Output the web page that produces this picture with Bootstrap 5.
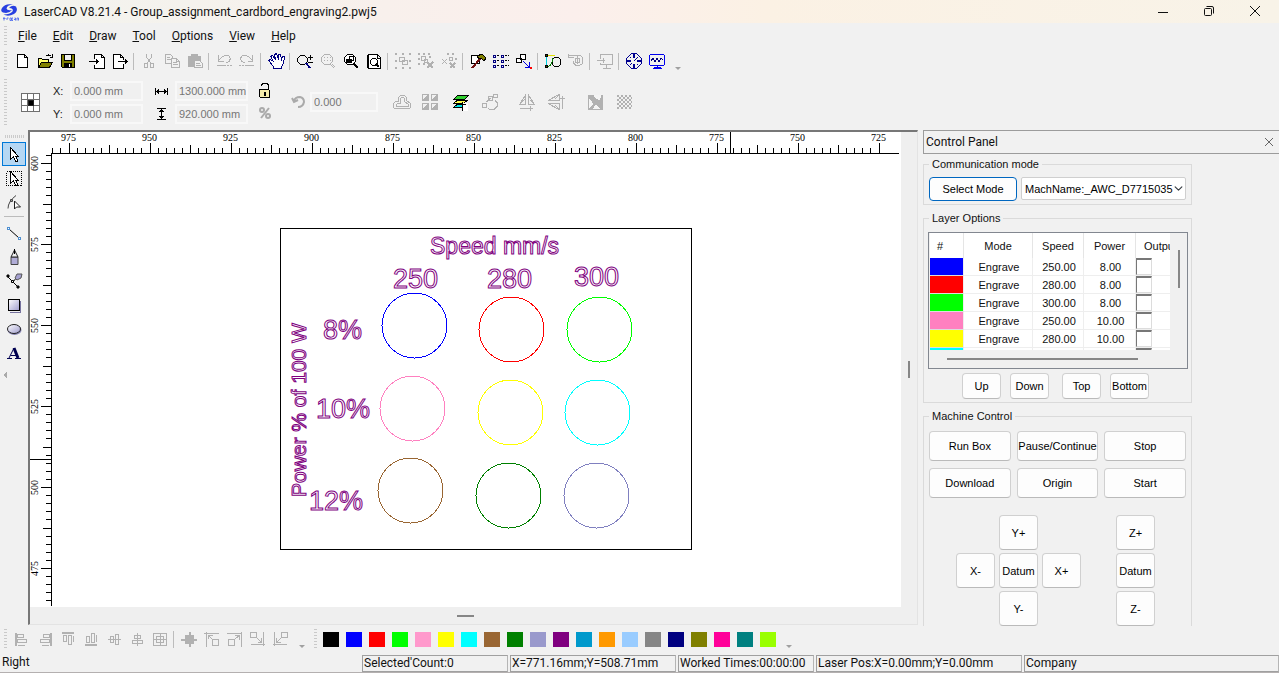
<!DOCTYPE html>
<html lang="en">
<head>
<meta charset="utf-8">
<meta name="viewport" content="width=device-width, initial-scale=1">
<title>LaserCAD V8.21.4</title>
<link href="https://cdn.jsdelivr.net/npm/bootstrap@5.3.0/dist/css/bootstrap.min.css" rel="stylesheet">
<style>
:root { --face: #f1f1f1; --off: #b1b1b1; --ui: Roboto, "Noto Sans", sans-serif; --form: "Liberation Sans", Arial, sans-serif; }
body { background: var(--face); color: #111; font: 12px/16px var(--ui); overflow: hidden; }
svg { display: block; flex: none; }
.titlebar { height: 23px; background: linear-gradient(90deg, #f2f4ee, #f8f0ec 30%, #fbefec 45%, #fbf1e4 60%, #f8f3e8); }
.win-controls { gap: 28px; padding-right: 15px; }
.plain { background: none; border: 0; padding: 0; color: inherit; display: flex; align-items: center; justify-content: center; }
.menubar { height: 25px; }
.menubar a { color: #111; text-decoration: none; padding: 0 8px; }
.grip { width: 3px; background: repeating-linear-gradient(#c9c9c9 0 1px, transparent 1px 3px); flex: none; }
.toolbar { height: 26px; }
.toolbar > .grip:first-child { margin: 0 3px 0 4px; }
.toolbar svg, .sidebar svg, .props svg { width: 18px; height: 18px; fill: none; stroke: currentColor; shape-rendering: crispEdges; }
.toolbar .plain { width: 23px; height: 22px; color: #000; }
.toolbar .plain:disabled, .props .plain:disabled { color: var(--off); }
.vline { width: 1px; height: 17px; background: #bcbcbc; margin: 0 3px 0 2px; flex: none; }
.more { width: 0; border: 3px solid transparent; border-top-color: #a0a0a0; border-bottom: 0; margin: 14px 0 0 7px; }
.swatches + .more { margin-left: 10px; }
.props { height: 56px; font-family: var(--form); font-size: 11px; color: #222; }
.props input { height: 20px; width: 73px; border: 2px solid #f8f8f8; background: #f0f0f0; color: #767676; padding: 0 0 0 2px; font-size: 11px; }
.props input.angle { width: 68px; }
.props-pair { display: grid; grid-template-columns: 17px 73px; row-gap: 3px; align-items: center; }
.sidebar { width: 28px; }
.sidebar .plain { width: 24px; height: 24px; color: #000; }
.sidebar .picked { background: #b5d7f3; border: 1px solid #0078d7; }
.sidebar .grip { width: 19px; height: 3px; background: repeating-linear-gradient(90deg, #cbcbcb 0 1px, transparent 1px 2px); margin: 5px 0 4px; }
.sidebar hr { width: 20px; border-color: #bbb; margin: 2px 0 4px; opacity: 1; }
.stage { display: grid; grid-template: 1fr 17px / 1fr 16px; border: 2px solid #696969; border-top-color: #777; border-left-color: #777; border-right: 1px solid #e3e3e3; border-bottom: 1px solid #e3e3e3; margin: 0 5px 1px 0; background: #efefef; min-width: 0; min-height: 0; }
.stage > svg { width: 100%; height: 100%; background: #fff; min-height: 0; overflow: hidden; shape-rendering: crispEdges; }
.stage text { font-family: "Liberation Serif", serif; font-size: 10px; text-anchor: middle; fill: #000; shape-rendering: auto; }
.stage .outline text { font-family: "Liberation Sans", Arial, sans-serif; font-size: 27px; text-anchor: start; fill: #fff; stroke: purple; stroke-width: 1; }
.stage .outline .speed-title { font-size: 23px; }
.stage .outline .power-title { font-size: 21px; }
.thumb { background: #868686; }
.panel { width: 356px; font-family: var(--form); font-size: 11px; line-height: 12px; }
.panel-head { height: 24px; border: 1px solid #9c9c9c; border-right: 0; font: 12px/16px var(--ui); padding: 0 6px 0 2px; flex: none; }
.group { width: 269px; border: 1px solid #dadada; padding: 7px 5px 3px; flex: none; }
.group legend { float: none; width: auto; margin: 0; padding: 0 3px; font-size: 11px; line-height: 12px; }
.group.layers { margin-top: 7px; padding-top: 8px; }
.group.machine { margin-top: 7px; padding-top: 9px; flex: 1 1 0; min-height: 0; overflow: hidden; border-bottom: 0; }
.key { background: #fdfdfd; border: 1px solid #d0d0d0; border-bottom-color: #bababa; border-radius: 4px; padding: 0; font-size: 11px; line-height: 12px; color: #000; white-space: nowrap; }
.key:hover { background: #e9f3fb; color: #000; }
.key.mode { width: 88px; height: 24px; border-color: #0067c0; flex: none; }
.machine-select { height: 23px; font-size: 11px; line-height: 12px; padding: 0 10px 0 3px; border: 1px solid #cfcfcf; border-radius: 2px; background-position: right 2px center; background-size: 9px; color: #000; text-overflow: clip; }
.layer-list { display: grid; grid-template: 117px 18px / 1fr 17px; border: 1px solid #828790; background: #f0f0f0; padding-left: 1px; margin: 0 -2px 0 -1px; }
.layer-view { overflow: hidden; background: #fff; }
.layer-view table { table-layout: fixed; width: 262px; border-collapse: separate; border-spacing: 0; text-align: center; }
.layer-view th { height: 25px; font-weight: 400; border-right: 1px solid #e5e5e5; padding: 1px 0 0; }
.layer-view td { height: 18px; border-right: 1px solid #eee; border-bottom: 1px solid #eee; padding: 1px 0 0 2px; }
.layer-view td.ink { padding: 0; border-bottom-color: #ddd; }
.layer-view td.pick { padding: 0; text-align: left; }
.pick input { appearance: none; display: block; width: 16px; height: 17px; border: 1px solid #dcdcdc; border-top: 2px solid #777; border-left-color: #777; background: #fff; margin: 0; }
.order .key { width: 39px; height: 26px; }
.machine-keys { display: grid; grid-template-columns: repeat(3, 1fr); gap: 7px 6px; grid-auto-rows: 30px; }
.jog { display: grid; grid-template: repeat(3, 35px) / repeat(3, 39px) 39px; column-gap: 4px; row-gap: 3px; margin: 17px 0 0 27px; }
.jog .z { margin-left: 31px; width: 39px; }
.swatch { width: 16px; height: 15px; border: 0; padding: 0; flex: none; }
.swatches { gap: 7px; }
.statusbar { height: 21px; padding-top: 3px; gap: 2px; border-bottom: 1px solid #b4b0b0; line-height: 15px; }
.statusbar div { border: 1px solid #a0a0a0; border-right-color: #b5b5b5; height: 17px; padding: 0 1px; flex: none; overflow: hidden; white-space: nowrap; }
.statusbar .hint { border: 0; width: 360px; padding-left: 2px; }
</style>
</head>
<body class="vh-100 d-flex flex-column">

<header class="titlebar d-flex align-items-center">
  <svg width="20" height="20" viewBox="0 0 20 20">
    <path d="M2 6Q5 1 13 2.500Q7 3 6.500 6.500Q7 9 12 8Q9 12 3 10.500Q0 9 2 6zM16 4.500Q18.500 9 14 12Q8 15 3.500 12.500Q10 12.500 12.500 9.500Q14 6 9 6Q12 2.500 16 4.500z" fill="#2740e0"/>
    <path d="M3 16.500h2.500M4 15v3.500M7 18v-2h1.500M10 16h1.500v2.500h-1.500zM13 16h-1v2.500h1M14 17.500h2M14.500 16h1v2.500M17 18.500v-2.500h1.500v2.500" stroke="#5c74ee" fill="none"/>
  </svg>
  <span class="ps-1">LaserCAD V8.21.4 - Group_assignment_cardbord_engraving2.pwj5</span>
  <div class="win-controls d-flex ms-auto">
    <button class="plain" aria-label="Minimize"><svg width="18" height="12" stroke="#111" fill="none"><path d="M4 6.500h10"/></svg></button>
    <button class="plain" aria-label="Maximize"><svg width="18" height="14" stroke="#111" fill="none"><rect x="4.500" y="3.500" width="7" height="7" rx="1"/><path d="M6.500 1.500h5.500q1.500 0 1.500 1.500v5.500"/></svg></button>
    <button class="plain" aria-label="Close"><svg width="18" height="14" stroke="#111" fill="none"><path d="M4 1l10 10M14 1l-10 10"/></svg></button>
  </div>
</header>

<nav class="menubar d-flex align-items-center">
  <span class="grip h-75 ms-1" style="margin-right:3px"></span>
  <a href="#"><u>F</u>ile</a><a href="#"><u>E</u>dit</a><a href="#"><u>D</u>raw</a><a href="#"><u>T</u>ool</a><a href="#"><u>O</u>ptions</a><a href="#"><u>V</u>iew</a><a href="#"><u>H</u>elp</a>
</nav>

<div class="toolbar d-flex align-items-center">
  <span class="grip h-75"></span>
  <button class="plain" aria-label="New"><svg><path fill="#fff" d="M4.500 2.500h7l3 3v10h-10zM11.500 2.500v3h3"/></svg></button>
  <button class="plain" aria-label="Open"><svg><path fill="#ffff70" d="M2.500 15.500v-9h3l1 1h6v3"/><path fill="#808000" d="M2.500 15.500l3-5h11l-3 5z"/><path d="M9.500 4.500q3-3 6 0M16.500 2v3.500h-3"/></svg></button>
  <button class="plain" aria-label="Save"><svg><path fill="#808000" d="M2.500 2.500h13v13h-12l-1-1z"/><path fill="#f1f1f1" d="M5.500 2.500h7v6h-7z"/><path fill="#000" d="M5.500 11.500h7v4h-7z"/><path stroke="#fff" d="M10.500 12v3"/></svg></button>
  <span class="vline opacity-0"></span>
  <button class="plain" aria-label="Import"><svg><path fill="#fff" d="M6.500 6.500v-4h7l3 3v11h-10v-4M13.500 2.500v3h3"/><path d="M1 9.500h10M8.500 7v5M9.500 8v3"/></svg></button>
  <button class="plain" aria-label="Export"><svg><path fill="#fff" d="M12.500 12v4.500h-10v-14h7l3 3v2M9.500 2.500v3h3"/><path d="M7 9.500h10M14.500 7v5M15.500 8v3"/></svg></button>
  <span class="vline"></span>
  <button class="plain" disabled aria-label="Cut"><svg><path d="M6.500 2v3l4 6M11.500 2v3l-4 6M4.500 11.500h3v4h-3zM10.500 11.500h3v4h-3z"/></svg></button>
  <button class="plain" disabled aria-label="Copy"><svg><path d="M2.500 2.500h5l2 2v7h-7zM4 5.500h3M4 7.500h4"/><path fill="#f1f1f1" d="M8.500 6.500h5l3 3v6h-8zM13.500 6.500v3h3M10 10.500h4M10 12.500h5"/></svg></button>
  <button class="plain" disabled aria-label="Paste"><svg><path fill="currentColor" d="M2.500 4.500h12v10h-12zM5.500 2.500h6v2h-6z"/><path fill="#f1f1f1" d="M8.500 8.500h5l3 3v4h-8zM10 11.500h4M10 13.500h5"/></svg></button>
  <span class="vline"></span>
  <button class="plain" disabled aria-label="Undo"><svg><path d="M3.500 3v6h5M3.500 8.500l4-4q6-3 7.500 1q1 4-4 5.500M2 13.500h9M12 13.500h2M15 13.500h2"/></svg></button>
  <button class="plain" disabled aria-label="Redo"><svg><path d="M14.500 3v6h-5M14.500 8.500l-4-4q-6-3-7.500 1q-1 4 4 5.500M16 13.500h-9M6 13.500h-2M3 13.500h-2"/></svg></button>
  <span class="vline"></span>
  <button class="plain" aria-label="Pan"><svg style="stroke:#000080"><path fill="#fff" d="M6.500 16.500v-2l-5-6 2-1 3 2-3-5 2-1 3 4-1-5 2-1 2 6v-5h2l1 5 1-3h2l-1 7-2 3v2z"/></svg></button>
  <span class="vline"></span>
  <button class="plain" aria-label="Zoom"><svg><path d="M4.500 3.500h4l3 3v3l-3 3h-4l-3-3v-3z"/><path d="M14.500 3v5M12 5.500h5M12 10.500h5"/><path stroke="#000080" stroke-width="2" d="M10 11l4 5"/></svg></button>
  <button class="plain" disabled aria-label="Zoom selection"><svg><path d="M5.500 2.500h5l3 3v4l-3 3h-5l-3-3v-4zM5 5.500h1M8 5.500h1M11 5.500h1M5 8.500h1M8 8.500h1M11 8.500h1M11 12l4 4M13 12l3 3"/></svg></button>
  <button class="plain" aria-label="Zoom all"><svg><path fill="#fff" d="M5.500 2.500h5l3 3v4l-3 3h-5l-3-3v-4zM4 4l-1 1M4 11l-1-1M12 4l1 1"/><path fill="#000" d="M4.500 7.500h5v3h-5z"/><path d="M7.500 7v-2.500h4v4h-2"/><path stroke-width="2" d="M12 12l4 4"/></svg></button>
  <button class="plain" aria-label="Zoom page"><svg><path fill="#fff" d="M3.500 2.500h9l3 3v11h-12zM2.500 3v13M12.500 3v3h3"/><path d="M7.500 6.500h3l2 2v3l-2 2h-3l-2-2v-3z"/><path stroke-width="2" d="M11 12l3 3"/></svg></button>
  <span class="vline"></span>
  <button class="plain" disabled aria-label="Group"><svg><path d="M5.500 5.500h5v4h-5zM8.500 8.500h5v4h-5z"/><path stroke-width="2" stroke-dasharray="2 5" d="M1 2h16M1 9h3M15 9h3M1 16h16"/></svg></button>
  <button class="plain" disabled aria-label="Ungroup"><svg><path d="M4.500 4.500h4v4h-4zM7.500 7.500h3v3h-3z"/><path stroke-width="2" stroke-dasharray="2 3" d="M1 2h12M1 7h2M1 12h7M12 5h2"/><path stroke-width="2" d="M10 10l6 6M16 10l-6 6"/></svg></button>
  <button class="plain" disabled aria-label="Ungroup all"><svg><path d="M9.500 5.500h3v3h-3zM2 7l5 5M7 7l-5 5"/><path stroke-width="2" stroke-dasharray="2 3" d="M7 2h10M15 7h2"/><path stroke-width="2" d="M10 11l5 5M15 11l-5 5"/></svg></button>
  <span class="vline"></span>
  <button class="plain" aria-label="Build"><svg><path fill="#fff" d="M2.500 3.500h8v8h-8z"/><path fill="#808000" d="M8 4l5-2 4 4-2 3-3-3-2 1z"/><path stroke="#701010" stroke-width="2" d="M11 7l-8 9"/></svg></button>
  <button class="plain" aria-label="Array list"><svg><path stroke="#000080" d="M1.500 3.500h2v2h-2zM9.500 3.500h2v2h-2zM1.500 8.500h2v2h-2zM9.500 8.500h2v2h-2zM1.500 13.500h2v2h-2zM9.500 13.500h2v2h-2z"/><path stroke-dasharray="2 1" d="M5 3.500h3M13 3.500h4M5 8.500h3M13 8.500h4M5 13.500h3M13 13.500h4"/></svg></button>
  <button class="plain" aria-label="Move to"><svg><path fill="#fff" d="M1.500 6.500h5v4h-5zM5.500 2.500h5v5h-5z"/><path stroke="#0000e0" d="M8 9l6 6M14.500 10v5h-5"/><path stroke="red" stroke-width="2" d="M15 16h2"/></svg></button>
  <span class="vline"></span>
  <button class="plain" aria-label="Node edit"><svg><path d="M10.500 5.500h4l2 2v5l-2 2h-4l-2-2v-5z"/><path stroke="#00d0e0" d="M2.500 5v9"/><path stroke="#e0e000" d="M4 3.500h7"/><path stroke="green" d="M4 14.500q4-1 5-8"/><path fill="#505000" d="M1.500 2.500h2v2h-2zM1.500 13.500h2v2h-2z"/></svg></button>
  <button class="plain" disabled aria-label="Path"><svg><path d="M1 3.500h11q4 0 4 5q0 4-4 5h-3q-3-2-3-5M1 5.500h6M8.500 6.500h4v4h-4zM10.500 4v8M1.500 2v4"/></svg></button>
  <span class="vline"></span>
  <button class="plain" disabled aria-label="Send"><svg><path d="M4.500 7v-4.500h12v10h-12v-2M10.500 13v3M7 16.500h8M1 8.500h8M7.500 6v5"/></svg></button>
  <span class="vline"></span>
  <button class="plain" aria-label="Target"><svg style="stroke:#000090"><path d="M6.500 1.500h5l5 5v5l-5 5h-5l-5-5v-5z"/><path stroke-width="2" d="M9 1v5M9 12v5M1 9h5M12 9h5"/><path d="M9 9l4-4M5 5l1 1M12 12l1 1M5 13l2-2"/></svg></button>
  <button class="plain" aria-label="Monitor"><svg style="stroke:#0000ee"><path d="M2.500 2.500h13l1 1v9l-1 1h-13l-1-1v-9z"/><path stroke="#000080" d="M3 8.500l2-2 2 3 2-3 2 3 2-3 2 1"/><path d="M9 14v2M5 16.500h9M6 15.500h7"/></svg></button>
  <span class="more"></span>
</div>

<div class="props d-flex align-items-center">
  <span class="grip ms-1" style="height:46px"></span>
  <button class="plain" aria-label="Anchor point" style="margin:0 13px 0 14px"><svg style="width:19px;height:19px"><path fill="#fff" stroke="#707070" d="M.500.500h18v18h-18zM6.500 0v19M12.500 0v19M0 6.500h19M0 12.500h19"/><path fill="#000" d="M7 7h5v5h-5z"/></svg></button>
  <div class="props-pair">
    <label for="px">X:</label><input id="px" value="0.000 mm">
    <label for="py">Y:</label><input id="py" value="0.000 mm">
  </div>
  <div class="props-pair" style="grid-template-columns:22px 73px;margin-left:10px">
    <label for="pw" aria-label="Width"><svg style="stroke:#000"><path d="M2.500 6v7M14.500 6v7M3 9.500h11M5.500 7v5M11.500 7v5M4.500 8v3M12.500 8v3"/></svg></label><input id="pw" value="1300.000 mm">
    <label for="ph" aria-label="Height"><svg style="stroke:#000"><path d="M4 3.500h9M4 14.500h9M8.500 4v10M6 6.500h5M6 11.500h5M7 5.500h3M7 12.500h3"/></svg></label><input id="ph" value="920.000 mm">
  </div>
  <div class="d-flex flex-column ms-2 align-items-center gap-1">
    <button class="plain" aria-label="Lock ratio"><svg style="stroke:#000"><path d="M5.500 4v-1l2-2h3l2 2v5"/><path fill="#f5ecaa" d="M3.500 7.500h9l1 1v7h-9l-1-1z"/><path fill="#000" d="M8.500 10.500h1v3h-1z"/></svg></button>
    <svg style="stroke:#aaa;stroke-width:2;shape-rendering:auto"><circle cx="6" cy="6" r="2"/><circle cx="12" cy="12" r="2"/><path d="M13 4l-8 10"/></svg>
  </div>
  <label for="pr" aria-label="Rotation" class="ms-3"><svg style="stroke:#aaa;stroke-width:2;shape-rendering:auto"><path d="M4 8q1-4 6-4q4 1 4 5q-1 5-6 5M2 5l2 4 4-2"/></svg></label>
  <input id="pr" class="angle" value="0.000" style="margin:0 13px 0 2px">
  <button class="plain me-2" disabled aria-label="Weld"><svg style="width:22px"><path d="M7.500 6.500v-2l2-2h4l2 2v3l4 3v4l-1 1h-15l-1-1v-4l2-2h3zM9.500 5.500l1-1h2l1 1v3l4 3v2h-12v-2l1-1h3z"/></svg></button>
  <button class="plain" disabled aria-label="Array"><svg><path d="M1.500 1.500h6v6h-6zM10.500 1.500h6v6h-6zM1.500 10.500h6v6h-6zM10.500 10.500h6v6h-6z"/><path fill="currentColor" d="M7 2v5h-5zM16 2v5h-5zM7 11v5h-5zM16 11v5h-5z"/></svg></button>
  <button class="plain" aria-label="Layers" style="margin-left:13px;color:#000"><svg><path fill="#00e8e8" d="M2 14l4-3h10l-4 3z"/><path fill="#ffff50" d="M2 10l4-3h10l-4 3z"/><path fill="#30d030" d="M2 6l4-4h11l-4 4z"/><path fill="#fff" stroke="none" d="M11 10h5v8h-5z"/><path d="M10.500 9v9M9 11.500h5"/></svg></button>
  <button class="plain" disabled aria-label="Path array" style="margin-left:11px"><svg><path d="M1.500 10.500h4v4h-4zM7.500 3.500h4v4h-4zM12.500 1.500h4v3h-4zM5.500 9l4-4M7 15.500l2 1h4l3-3v-4l-2-2"/></svg></button>
  <button class="plain" disabled aria-label="Mirror horizontally" style="margin-left:19px"><svg><path d="M7.500 2v9.500h-6zM10.500 2v9.500h6zM3 10l4-4M12 7l4 4M2 15.500h13M12.500 13v5"/></svg></button>
  <button class="plain" disabled aria-label="Mirror vertically" style="margin-left:11px"><svg><path d="M12 1.500v6h-11zM12 16.500v-6h-11zM8 6l4-4M8 12l4 4M15.500 3v13M13 5.500h5"/></svg></button>
  <button class="plain" disabled aria-label="Invert" style="margin-left:21px"><svg><path fill="currentColor" d="M2 2h14v14h-14z"/><path stroke="#f4f4f4" fill="#f4f4f4" d="M3 6v9l4-4zM8 3l7-1-2 5zM10 12l3 3h-5z"/></svg></button>
  <button class="plain" disabled aria-label="Dither" style="margin-left:11px"><svg><path stroke-width="2" stroke-dasharray="2 2" d="M2 3h14M2 7h14M2 11h14M2 15h14M4 5h13M4 9h13M4 13h13"/></svg></button>
</div>

<main class="d-flex flex-grow-1" style="min-height:0">
  <div class="sidebar d-flex flex-column align-items-center flex-shrink-0">
    <span class="grip"></span>
    <button class="plain picked" aria-label="Select"><svg><path fill="#fff" d="M5.500 2.500v12l3-3 2 5h2v-2l-2-3h3z"/></svg></button>
    <button class="plain" aria-label="Select area"><svg><path stroke-dasharray="1 1" d="M1.500 2.500h15v14h-15z"/><path fill="#fff" d="M5.500 2.500v12l3-3 2 5h2v-2l-2-3h3z"/></svg></button>
    <button class="plain" aria-label="Edit nodes"><svg style="shape-rendering:auto;stroke:#444"><path d="M3 15.500q0-7 8-13M5.500 6.500h2v2h-2z"/><path fill="#fff" stroke="#222" d="M9.500 8v8l2-2h4z"/></svg></button>
    <hr>
    <button class="plain" aria-label="Line"><svg><path d="M4 5l10 9" style="shape-rendering:auto"/><path fill="#fff" stroke="#4e8fd0" d="M2.500 3.500h2v2h-2zM13.500 13.500h2v2h-2z"/></svg></button>
    <button class="plain" aria-label="Pen"><svg style="shape-rendering:auto"><path fill="#b0acd6" d="M6 9h7v7.500h-7z" stroke="#444"/><path fill="#eee" d="M9.500 2l3.500 7h-7z" stroke="#222"/><path d="M9.500 1v5"/></svg></button>
    <button class="plain" aria-label="Bezier"><svg style="shape-rendering:auto"><path d="M3 5l5 5 5 5M8 10l4-5"/><path fill="#222" d="M2 3h2v2h-2zM12 14h2v2h-2z"/><path fill="#a5a1d0" stroke="#555" d="M10 6l2-4h5l-1 4-4 2z"/><path fill="#fff" d="M6.500 8.500h2v2h-2z"/></svg></button>
    <button class="plain" aria-label="Rectangle"><svg><defs><linearGradient id="metal" x2="1" y2="1"><stop stop-color="#fff"/><stop offset="1" stop-color="#9e9bcd"/></linearGradient></defs><path stroke="#77739f" d="M15.500 5v11.500h-11"/><path fill="url(#metal)" d="M3.500 3.500h11v11h-11z"/></svg></button>
    <button class="plain" aria-label="Ellipse"><svg style="shape-rendering:auto"><ellipse cx="9.500" cy="10" rx="7" ry="5" fill="#8683b2" stroke="none"/><ellipse cx="9" cy="9" rx="6.500" ry="4.500" fill="url(#metal)" stroke="#222"/></svg></button>
    <button class="plain" aria-label="Text"><svg style="shape-rendering:auto;stroke:#000050"><path d="M2 14.500h5M10 14.500h6M5.500 11.500h6"/><path d="M4 14L9 4"/><path stroke-width="3" d="M9 4l4 10"/></svg></button>
    <svg style="width:6px;height:8px;margin:6px auto 0 2px;fill:#aaa;stroke:none"><path d="M5 0v8l-4-4z"/></svg>
  </div>

  <section class="stage flex-grow-1">
    <svg role="img" aria-label="Drawing area">
      <g id="rulers" stroke="#000"></g>
      <g fill="none">
        <rect x="250.500" y="96.500" width="411" height="321" stroke="#000"/>
        <circle cx="384.500" cy="193.500" r="32.500" stroke="#00f"/>
        <circle cx="481.500" cy="197.500" r="32.500" stroke="red"/>
        <circle cx="569.500" cy="197.500" r="32.500" stroke="lime"/>
        <circle cx="382.500" cy="276.500" r="32.500" stroke="#ff80c0"/>
        <circle cx="480.500" cy="280.500" r="32.500" stroke="#ff0"/>
        <circle cx="567.500" cy="280.500" r="32.500" stroke="aqua"/>
        <circle cx="380.500" cy="358.500" r="32.500" stroke="#996633"/>
        <circle cx="478.500" cy="363.500" r="32.500" stroke="green"/>
        <circle cx="566.500" cy="363.500" r="32.500" stroke="#8080c0"/>
      </g>
      <g class="outline">
        <text x="400" y="122" class="speed-title">Speed mm/s</text>
        <text x="363" y="156">250</text>
        <text x="457" y="156">280</text>
        <text x="544" y="154">300</text>
        <text x="293" y="207">8%</text>
        <text x="286" y="286">10%</text>
        <text x="279" y="378">12%</text>
        <text transform="translate(276 365) rotate(-90)" class="power-title">Power % of 100 W</text>
      </g>
    </svg>
    <div class="d-flex align-items-center justify-content-center"><span class="thumb" style="width:2px;height:17px"></span></div>
    <div class="d-flex align-items-center justify-content-center"><span class="thumb" style="width:17px;height:2px"></span></div>
  </section>

  <aside class="panel d-flex flex-column flex-shrink-0">
    <div class="panel-head d-flex align-items-center justify-content-between">Control Panel
      <button class="plain" aria-label="Close panel"><svg width="8" height="8" stroke="#666"><path d="M0 0l8 8M8 0l-8 8"/></svg></button>
    </div>
    <fieldset class="group mt-1">
      <legend>Communication mode</legend>
      <div class="d-flex gap-1">
        <button class="btn key mode">Select Mode</button>
        <select class="form-select machine-select" aria-label="Machine"><option>MachName:_AWC_D7715035</option></select>
      </div>
    </fieldset>
    <fieldset class="group layers">
      <legend>Layer Options</legend>
      <div class="layer-list">
        <div class="layer-view">
          <table>
            <colgroup><col style="width:34px"><col style="width:69px"><col style="width:51px"><col style="width:52px"><col></colgroup>
            <thead><tr><th class="text-start ps-1">&nbsp;#</th><th>Mode</th><th>Speed</th><th>Power</th><th class="text-start ps-2">Output</th></tr></thead>
            <tbody id="layers"></tbody>
          </table>
        </div>
        <div class="d-flex justify-content-center"><span class="thumb" style="width:2px;height:38px;margin-top:17px"></span></div>
        <div class="d-flex align-items-center"><span class="thumb" style="width:191px;height:2px;margin-left:17px"></span></div>
      </div>
      <div class="order d-flex mt-1" style="padding-left:33px;gap:9px">
        <button class="btn key">Up</button><button class="btn key me-1">Down</button><button class="btn key">Top</button><button class="btn key">Bottom</button>
      </div>
    </fieldset>
    <fieldset class="group machine">
      <legend>Machine Control</legend>
      <div class="machine-keys">
        <button class="btn key">Run Box</button><button class="btn key">Pause/Continue</button><button class="btn key">Stop</button>
        <button class="btn key">Download</button><button class="btn key">Origin</button><button class="btn key">Start</button>
      </div>
      <div class="jog">
        <span></span><button class="btn key">Y+</button><span></span><button class="btn key z">Z+</button>
        <button class="btn key">X-</button><button class="btn key">Datum</button><button class="btn key">X+</button><button class="btn key z">Datum</button>
        <span></span><button class="btn key">Y-</button><span></span><button class="btn key z">Z-</button>
      </div>
    </fieldset>
  </aside>
</main>

<div class="toolbar d-flex align-items-center">
  <span class="grip h-75"></span>
  <button class="plain" disabled aria-label="Align left"><svg><path d="M4.500 4.500h6v3h-6zM4.500 9.500h9v3h-9zM5 15.500h7"/><path stroke-width="2" d="M3 3v13"/></svg></button>
  <button class="plain" disabled aria-label="Align right"><svg><path d="M7.500 4.500h6v3h-6zM4.500 9.500h9v3h-9zM6 15.500h7"/><path stroke-width="2" d="M15 3v13"/></svg></button>
  <button class="plain" disabled aria-label="Align top"><svg><path d="M4.500 5.500h3v6h-3zM9.500 5.500h3v9h-3zM14.500 6v6"/><path stroke-width="2" d="M3 3h12"/></svg></button>
  <button class="plain" disabled aria-label="Align bottom"><svg><path d="M4.500 6.500h3v6h-3zM9.500 3.500h3v9h-3zM14.500 5v7"/><path stroke-width="2" d="M3 15h12"/></svg></button>
  <button class="plain" disabled aria-label="Align middle"><svg><path d="M5.500 6.500h3v6h-3zM10.500 4.500h3v10h-3zM3 9.500h13"/></svg></button>
  <button class="plain" disabled aria-label="Align centre"><svg><path d="M6.500 5.500h6v3h-6zM4.500 10.500h10v3h-10zM9.500 3v13"/></svg></button>
  <button class="plain" disabled aria-label="Page centre"><svg><path d="M2.500 3.500h13v12h-13zM5.500 6.500h7v6h-7zM9.500 3v13M2 9.500h13"/></svg></button>
  <span class="vline"></span>
  <button class="plain" disabled aria-label="Centre"><svg><path fill="currentColor" d="M5.500 5.500h8v8h-8z"/><path stroke-width="2" d="M10 2v15M1 10h16"/></svg></button>
  <button class="plain" disabled aria-label="Top left"><svg><path d="M1 3.500h15M3.500 2v15M9.500 9.500h6v6h-6zM5 5l4 4M5.500 9v-3.500h4"/></svg></button>
  <button class="plain" disabled aria-label="Top right"><svg><path d="M1 3.500h15M15.500 2v15M2.500 9.500h6v6h-6zM14 5l-5 4M9 5.500h4.500v4"/></svg></button>
  <button class="plain" disabled aria-label="Bottom right"><svg><path d="M1.500 2.500h6v5h-6zM14.500 2v14M2 14.500h14M8 8l4 4M12.500 8v4.500h-4"/></svg></button>
  <button class="plain" disabled aria-label="Bottom left"><svg><path d="M9.500 2.500h6v5h-6zM2.500 2v14M1 14.500h14M9 8l-4 4M4.500 8v4.500h4"/></svg></button>
  <span class="more"></span>
  <span class="grip h-75" style="margin:0 6px 0 9px"></span>
  <div class="swatches d-flex" id="swatches"></div>
  <span class="more"></span>
</div>

<footer class="statusbar d-flex">
  <div class="hint">Right</div>
  <div style="width:146px">Selected'Count:0</div>
  <div style="width:166px">X=771.16mm;Y=508.71mm</div>
  <div style="width:136px">Worked Times:00:00:00</div>
  <div style="width:206px">Laser Pos:X=0.00mm;Y=0.00mm</div>
  <div class="flex-grow-1">Company</div>
</footer>

<script src="https://cdn.jsdelivr.net/npm/bootstrap@5.3.0/dist/js/bootstrap.bundle.min.js"></script>
<script>
// Rulers: one tick per 2.5 mm, a label every 25 mm
const origin = 21, step = 8.1;
let marks = `<path d="M${origin} 21.500H869M21.500 ${origin}V474M700.500 0V22M0 327.500H22"/>`;
const size = i => i % 10 === 0 ? 11 : i % 5 === 0 ? 9 : 6;
for (let i = -2; i < 101; i++) {
  const x = Math.floor(39 + i * step) + .5;
  if (x < 869) marks += `<path d="M${x} 22v-${size(i)}"/>`;
  if (i % 10 === 0 && x < 869) marks += `<text stroke="none" x="${x - 1}" y="9">${975 - i * 2.5}</text>`;
}
for (let i = -1; i < 55; i++) {
  const y = Math.floor(31.500 + i * step) + .5;
  marks += `<path d="M22 ${y}h-${size(i)}"/>`;
  if (i % 10 === 0) marks += `<text stroke="none" transform="translate(8 ${y}) rotate(-90)">${600 - i * 2.5}</text>`;
}
document.getElementById('rulers').innerHTML = marks;

const layers = [['#0000ff', '250.00', '8.00'], ['#ff0000', '280.00', '8.00'], ['#00ff00', '300.00', '8.00'], ['#ff80c0', '250.00', '10.00'], ['#ffff00', '280.00', '10.00'], ['#00ffff', '', '']];
document.getElementById('layers').innerHTML = layers.map(([c, s, p], i) =>
  `<tr><td class="ink" style="background:${c}"></td><td>${s && 'Engrave'}</td><td>${s}</td><td>${p}</td><td class="pick"><input type="checkbox" aria-label="Output layer ${i + 1}"></td></tr>`).join('');

const inks = '#000 #00f #f00 #0f0 #f9c #ff0 #0ff #963 #008000 #99c #800080 #09c #f90 #9cf #868686 #000080 #808000 #ff0099 #008080 #9f0'.split(' ');
document.getElementById('swatches').innerHTML = inks.map(c => `<button class="swatch" aria-label="Colour ${c}" style="background:${c}"></button>`).join('');
</script>
</body>
</html>
